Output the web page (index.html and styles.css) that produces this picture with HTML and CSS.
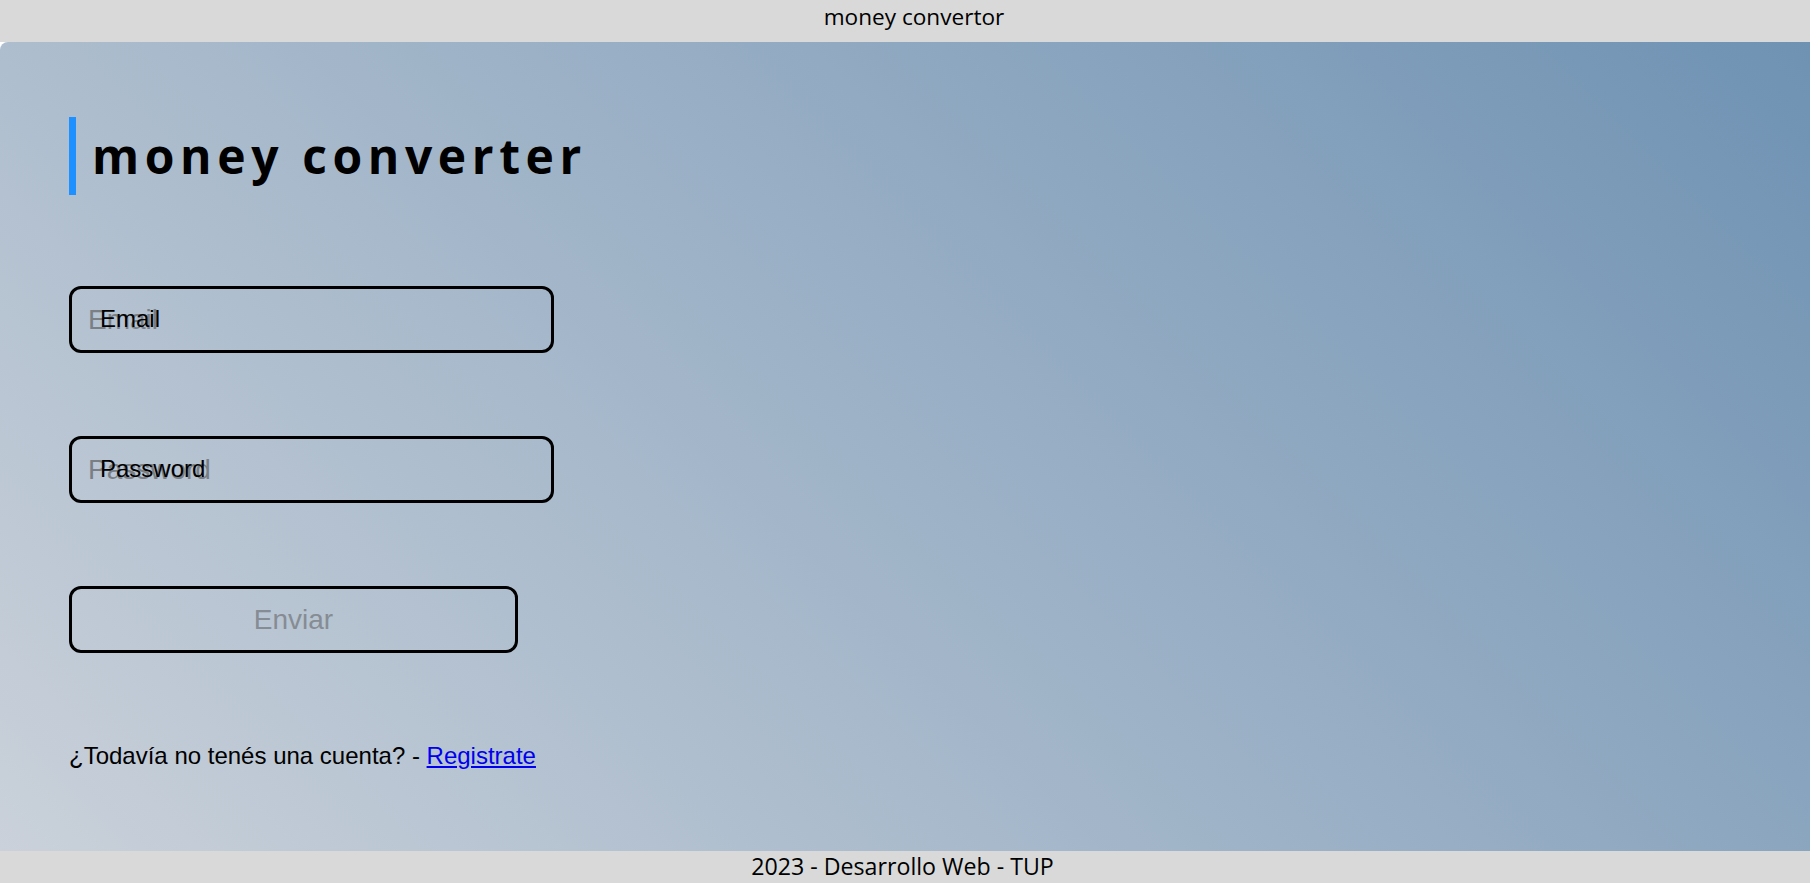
FILE: index.html
```html
<!DOCTYPE html>
<html lang="es">
<head>
<meta charset="utf-8">
<title>money convertor</title>
<link rel="stylesheet" href="styles.css">
</head>
<body>
<header class="topbar">money convertor</header>
<main class="login">
  <h1 class="title">money converter</h1>
  <form class="form">
    <div class="field field-wide">
      <input class="input" type="email" placeholder="Email">
      <label class="label">Email</label>
    </div>
    <div class="field field-wide">
      <input class="input" type="password" placeholder="Password">
      <label class="label">Password</label>
    </div>
    <button class="submit" type="submit" disabled>Enviar</button>
  </form>
  <p class="signup">¿Todavía no tenés una cuenta? - <a class="signup-link" href="#">Registrate</a></p>
</main>
<footer class="bottombar">2023 - Desarrollo Web - TUP</footer>
</body>
</html>
```

FILE: styles.css
```css
* { box-sizing: border-box; }

html, body { height: 100%; }

body {
  margin: 0;
  background: #ffffff;
  display: flex;
  flex-direction: column;
  font-family: "Liberation Sans", Arial, sans-serif;
}

.topbar {
  height: 42px;
  flex: 0 0 42px;
  background: #d9d9d9;
  display: flex;
  align-items: flex-start;
  justify-content: center;
  font-family: "Open Sans", "Noto Sans", sans-serif;
  font-size: 22.6px;
  line-height: 32px;
  padding-top: 1px;
  padding-left: 18px;
  color: #000;
}

.login {
  flex: 1 1 auto;
  background: linear-gradient(45deg, #cad1da 0%, #6f92b3 100%);
  border-top-left-radius: 8px;
  padding: 75px 0 0 69px;
  display: flex;
  flex-direction: column;
  align-items: flex-start;
}

.title {
  margin: 0;
  border-left: 7px solid #1e90ff;
  padding-left: 16px;
  height: 78px;
  line-height: 78px;
  font-family: "Open Sans", "Noto Sans", sans-serif;
  font-weight: 700;
  font-size: 48px;
  letter-spacing: 5.6px;
  color: #000;
}

.form {
  margin-top: 91px;
  display: flex;
  flex-direction: column;
  gap: 83px;
}

.field {
  position: relative;
  height: 67px;
}

.field-wide { width: 485px; }

.input {
  width: 100%;
  height: 100%;
  border: 3px solid #000;
  border-radius: 12px;
  background: transparent;
  padding: 0 0 0 16px;
  font-family: "Liberation Sans", Arial, sans-serif;
  font-size: 28px;
  color: #000;
  outline: none;
}

.input::placeholder { color: #7a7f85; opacity: 1; }

.label {
  position: absolute;
  left: 31px;
  top: 19px;
  font-size: 24px;
  line-height: 27px;
  color: #000;
  pointer-events: none;
}

.submit {
  width: 449px;
  height: 67px;
  border: 3px solid #000;
  border-radius: 12px;
  background: transparent;
  font-family: "Liberation Sans", Arial, sans-serif;
  font-size: 28px;
  color: #868c93;
  padding: 0;
}

.signup {
  margin: 89px 0 0 0;
  font-size: 24px;
  line-height: 28px;
  color: #000;
}

.signup-link { color: #0000ee; }

.bottombar {
  height: 32px;
  flex: 0 0 32px;
  background: #d9d9d9;
  display: flex;
  align-items: flex-start;
  justify-content: center;
  font-family: "Open Sans", "Noto Sans", sans-serif;
  font-size: 23.2px;
  line-height: 30px;
  padding-right: 5px;
  color: #000;
}
```
